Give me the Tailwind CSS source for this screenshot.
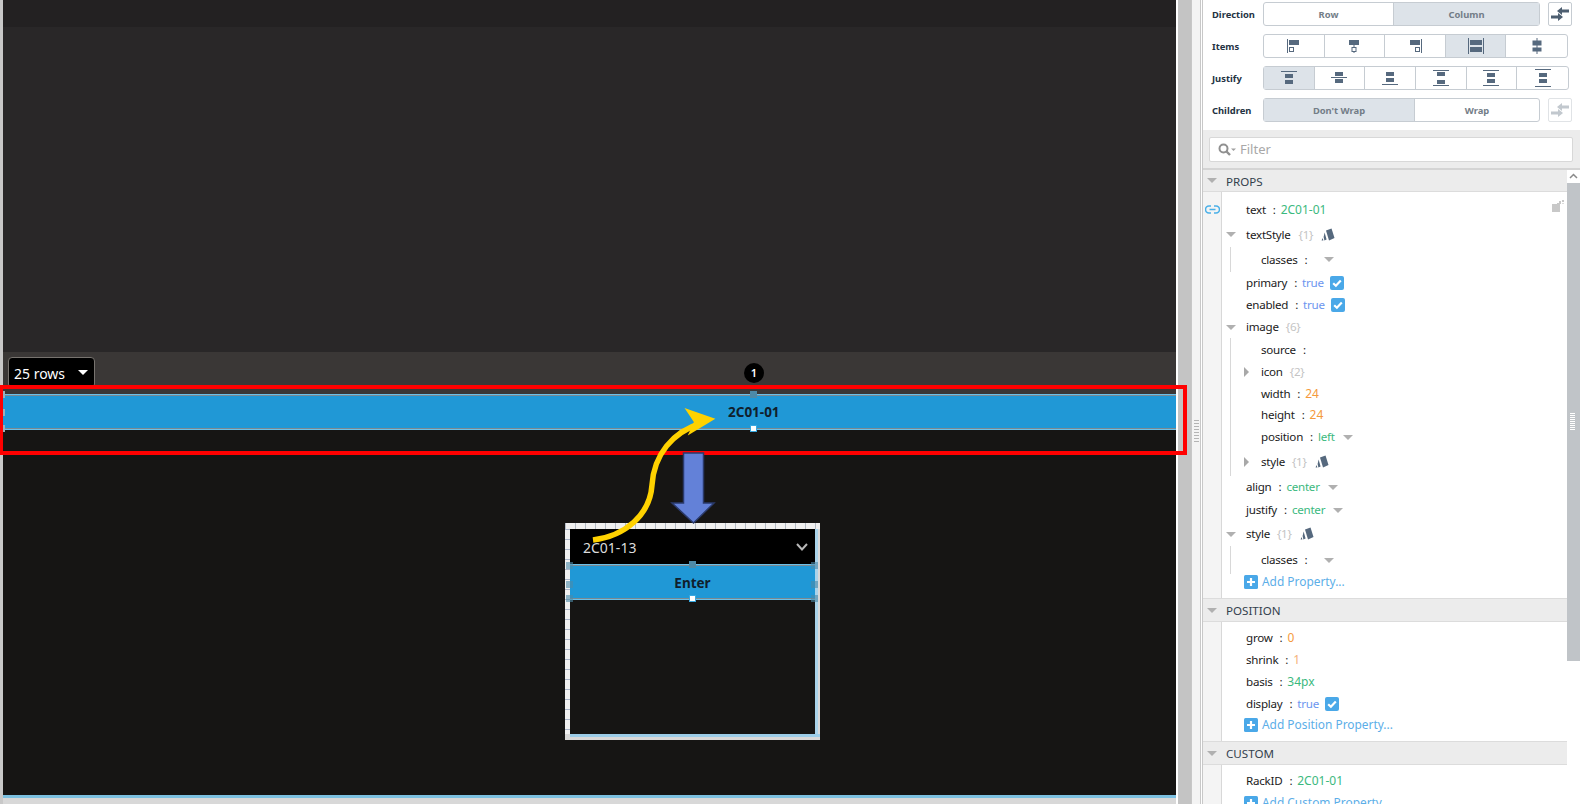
<!DOCTYPE html>
<html lang="en">
<head>
    <meta charset="UTF-8">
    <title>Perspective Designer</title>
    <script src="https://cdn.jsdelivr.net/npm/@tailwindcss/browser@4"></script>
</head>
<body class="bg-[#c4c4c4]">
<svg class="hidden">
    <symbol id="tag" viewBox="0 0 14 14"><path d="M5 2.5 10.5 0.5 13.5 10 8 12.5Z" fill="#56697e"/><path d="M3.6 4.5 5.6 11.5 3.4 12.5 2.6 9Z M1.5 10 2.4 12.6 0.6 12.6Z" fill="#56697e"/></symbol>
    <symbol id="check" viewBox="0 0 14 14"><rect width="14" height="14" rx="2" fill="#4aa8e8"/><path d="M3.2 7.2 5.9 9.8 10.8 4.6" fill="none" stroke="#fff" stroke-width="2.2"/></symbol>
    <symbol id="plus" viewBox="0 0 14 14"><rect width="14" height="14" rx="1.5" fill="#4aa8e8"/><path d="M7 3V11M3 7H11" stroke="#fff" stroke-width="2.2"/></symbol>
    <symbol id="swap" viewBox="0 0 18 14"><path d="M18 2.5H11V0L6 4 11 8V5.5H18Z M0 8.5H7V6L12 10 7 14V11.5H0Z" fill="currentColor"/></symbol>
</svg>

<div class="relative flex w-[1580px] h-[804px] overflow-hidden font-['Noto_Sans',sans-serif]">

    <!-- Canvas -->
    <main class="flex flex-col w-[1176px] h-full shrink-0 border-l-[3px] border-[#c8c8c8] bg-[#161514]">
        <div class="h-[27px] shrink-0 bg-[#232122]"></div>
        <div class="h-[325px] shrink-0 bg-[#292728]"></div>
        <div class="h-[42px] shrink-0 bg-[#3a3736] pl-[5px] pt-[5px]">
            <div class="flex items-center justify-between w-[87px] h-[31px] pl-[5px] pr-[5px] bg-black border border-[#77736f] rounded-[4px] text-white text-[14px]">
                <span class="pt-[1px]">25 rows</span>
                <span class="mr-[1px] border-x-[5px] border-x-transparent border-t-[5px] border-t-white"></span>
            </div>
        </div>
        <div class="flex items-center h-[36px] shrink-0 pl-[725px] bg-[#2098d6] border-y border-[#6cc0e8] shadow-[inset_0_1px_0_#7a8a92,inset_0_-1px_0_#7a8a92]">
            <span class="pt-[1px] text-[13.5px] font-bold text-[#10202c]">2C01-01</span>
        </div>

        <div class="flex-1 pt-[93px] pl-[562px]">
            <!-- Embedded view with its rulers -->
            <div class="flex flex-col w-[255px] h-[217px] bg-[#d8d8d8]">
                <div class="h-[6px] shrink-0 bg-[repeating-linear-gradient(to_right,#b4bcc8_0,#b4bcc8_1px,#f0f0f0_1px,#f0f0f0_10px)]"></div>
                <div class="flex flex-1">
                    <div class="w-[5px] shrink-0 bg-[repeating-linear-gradient(to_bottom,#a8b4c8_0,#a8b4c8_1px,#f0f0f0_1px,#f0f0f0_10px)]"></div>
                    <div class="flex-1 bg-[#161514]">
                        <div class="flex items-center justify-between h-[35px] pl-[13px] pr-[7px] bg-black text-[#dcdcdc] text-[14px]">
                            <span class="pt-[2px]">2C01-13</span>
                            <svg class="w-[12px] h-[8px]" viewBox="0 0 12 8"><path d="M1 1 6 6.5 11 1" fill="none" stroke="#b8b8b8" stroke-width="2"/></svg>
                        </div>
                        <div class="flex items-center justify-center h-[36px] bg-[#2098d6] border-y border-[#6cc0e8] shadow-[inset_0_1px_0_#7a8a92,inset_0_-1px_0_#7a8a92] text-[13.5px] font-bold text-[#10202c]"><span class="pt-[2px]">Enter</span></div>
                    </div>
                    <div class="w-[5px] shrink-0 bg-[#d8d8d8] border-l-[3px] border-[#a9d3ea]"></div>
                </div>
                <div class="h-[6px] shrink-0 ml-[5px] bg-[#d8d8d8] border-t-[3px] border-[#9ccde8]"></div>
            </div>
        </div>
        <div class="h-[9px] shrink-0 bg-[#d8d8d8] border-t-[3px] border-[#7cc0e0]"></div>
    </main>

    <!-- Splitter -->
    <div class="w-[2px] shrink-0 bg-white"></div>
    <div class="w-[13px] shrink-0 bg-[#c4c4c4]"></div>
    <div class="relative w-[10px] shrink-0 bg-[#f4f4f4] border-x border-[#c8c8c8]">
        <div class="absolute left-[2px] top-[420px] w-[5px] h-[24px] bg-[repeating-linear-gradient(to_bottom,#b4b4b4_0,#b4b4b4_1px,transparent_1px,transparent_3px)]"></div>
    </div>
    <div class="w-[2px] shrink-0 bg-white border-r border-[#c8c8c8]"></div>

    <!-- Property panel -->
    <aside class="flex flex-col w-[377px] h-full shrink-0 bg-white text-[11.6px] tracking-[-0.25px] text-[#1b1b1b]">
        <div class="flex flex-col gap-[8px] h-[130px] shrink-0 pt-[2px] bg-white tracking-normal">
            <div class="flex items-center h-[24px] pl-[9px]">
                <span class="w-[51px] pt-[2px] text-[9.4px] font-bold text-[#243343]">Direction</span>
                <div class="flex w-[277px] h-[24px] border border-[#c6ccd2] rounded-[3px] text-[9.4px] font-bold text-[#737d87]">
                    <div class="flex-1 flex items-center justify-center"><span class="pt-[2px]">Row</span></div>
                    <div class="w-[146px] flex items-center justify-center bg-[#dde3e9] border-l border-[#c6ccd2]"><span class="pt-[2px]">Column</span></div>
                </div>
                <div class="flex items-center justify-center w-[24px] h-[24px] ml-[8px] border border-[#c6ccd2] rounded-[2px] text-[#4d5e70]">
                    <svg class="w-[18px] h-[14px]"><use href="#swap"/></svg>
                </div>
            </div>
            <div class="flex items-center h-[24px] pl-[9px]">
                <span class="w-[51px] pt-[2px] text-[9.4px] font-bold text-[#243343]">Items</span>
                <div class="grid grid-cols-5 w-[305px] h-[24px] border border-[#c6ccd2] rounded-[3px] divide-x divide-[#c6ccd2]">
                    <div class="flex items-center justify-center"><svg class="w-[14px] h-[14px]" viewBox="0 0 14 14"><path d="M.5 0V14" stroke="#56697e"/><rect x="2" y="1" width="10" height="5" fill="#56697e"/><rect x="2.5" y="8.5" width="4" height="4" fill="none" stroke="#56697e"/></svg></div>
                    <div class="flex items-center justify-center"><svg class="w-[14px] h-[14px]" viewBox="0 0 14 14"><rect x="2" y="1" width="10" height="5" fill="#56697e"/><rect x="5" y="8.5" width="4" height="4" fill="none" stroke="#56697e"/><path d="M7 6V8M7 12.5V14" stroke="#56697e"/></svg></div>
                    <div class="flex items-center justify-center"><svg class="w-[14px] h-[14px]" viewBox="0 0 14 14"><path d="M13.5 0V14" stroke="#56697e"/><rect x="2" y="1" width="10" height="5" fill="#56697e"/><rect x="7.5" y="8.5" width="4" height="4" fill="none" stroke="#56697e"/></svg></div>
                    <div class="flex items-center justify-center bg-[#dde3e9]"><svg class="w-[16px] h-[16px]" viewBox="0 0 16 16"><path d="M.5 0V16M15.5 0V16" stroke="#56697e"/><rect x="2" y="2" width="12" height="5" fill="#56697e"/><rect x="2" y="9" width="12" height="5" fill="#56697e"/></svg></div>
                    <div class="flex items-center justify-center"><svg class="w-[14px] h-[16px]" viewBox="0 0 14 16"><path d="M7 0V16" stroke="#56697e"/><rect x="2.5" y="2.5" width="9" height="5" fill="#56697e"/><rect x="2.5" y="9.5" width="9" height="4" fill="#56697e"/></svg></div>
                </div>
            </div>
            <div class="flex items-center h-[24px] pl-[9px]">
                <span class="w-[51px] pt-[2px] text-[9.4px] font-bold text-[#243343]">Justify</span>
                <div class="grid grid-cols-6 w-[306px] h-[24px] border border-[#c6ccd2] rounded-[3px] divide-x divide-[#c6ccd2]">
                    <div class="flex items-center justify-center bg-[#dde3e9]"><svg class="w-[16px] h-[14px]" viewBox="0 0 16 14"><path d="M0 .5H16" stroke="#56697e"/><rect x="4" y="3" width="8" height="4" fill="#56697e"/><rect x="4" y="9" width="8" height="4" fill="#56697e"/></svg></div>
                    <div class="flex items-center justify-center"><svg class="w-[16px] h-[14px]" viewBox="0 0 16 14"><path d="M0 6.5H16" stroke="#56697e"/><rect x="4" y="1" width="8" height="4" fill="#56697e"/><rect x="4" y="8" width="8" height="4" fill="#56697e"/></svg></div>
                    <div class="flex items-center justify-center"><svg class="w-[16px] h-[14px]" viewBox="0 0 16 14"><path d="M0 13.5H16" stroke="#56697e"/><rect x="4" y="1" width="8" height="4" fill="#56697e"/><rect x="4" y="7" width="8" height="4" fill="#56697e"/></svg></div>
                    <div class="flex items-center justify-center"><svg class="w-[16px] h-[16px]" viewBox="0 0 16 16"><path d="M0 .5H16M0 15.5H16" stroke="#56697e"/><rect x="4" y="2" width="8" height="4" fill="#56697e"/><rect x="4" y="10" width="8" height="4" fill="#56697e"/></svg></div>
                    <div class="flex items-center justify-center"><svg class="w-[16px] h-[16px]" viewBox="0 0 16 16"><path d="M0 .5H16M0 15.5H16" stroke="#56697e"/><rect x="4" y="3" width="8" height="4" fill="#56697e"/><rect x="4" y="9" width="8" height="4" fill="#56697e"/></svg></div>
                    <div class="flex items-center justify-center"><svg class="w-[16px] h-[18px]" viewBox="0 0 16 18"><path d="M0 .5H16M0 17.5H16" stroke="#56697e"/><rect x="4" y="4" width="8" height="4" fill="#56697e"/><rect x="4" y="10" width="8" height="4" fill="#56697e"/></svg></div>
                </div>
            </div>
            <div class="flex items-center h-[24px] pl-[9px]">
                <span class="w-[51px] pt-[2px] text-[9.4px] font-bold text-[#243343]">Children</span>
                <div class="flex w-[277px] h-[24px] border border-[#c6ccd2] rounded-[3px] text-[9.4px] font-bold text-[#737d87]">
                    <div class="w-[151px] flex items-center justify-center bg-[#dde3e9] border-r border-[#c6ccd2]"><span class="pt-[2px]">Don't Wrap</span></div>
                    <div class="flex-1 flex items-center justify-center"><span class="pt-[2px]">Wrap</span></div>
                </div>
                <div class="flex items-center justify-center w-[24px] h-[24px] ml-[8px] border border-[#e0e3e6] rounded-[2px] text-[#c2c8ce]">
                    <svg class="w-[18px] h-[14px]"><use href="#swap"/></svg>
                </div>
            </div>
        </div>

        <div class="h-[38px] shrink-0 pt-[7px] pl-[6px] bg-[#ececec] tracking-normal">
            <div class="flex items-center w-[364px] h-[25px] pl-[8px] bg-white border border-[#d8d8d8] rounded-[2px]">
                <svg class="w-[18px] h-[14px] mr-[4px]" viewBox="0 0 18 14"><circle cx="5.5" cy="5.5" r="4" fill="none" stroke="#909090" stroke-width="2"/><path d="M8.5 8.5 12 12" stroke="#909090" stroke-width="2.4"/><path d="M13 5.5H18L15.5 8Z" fill="#a0a0a0"/></svg>
                <span class="text-[13px] text-[#a8a8a8]">Filter</span>
            </div>
        </div>

        <div class="relative flex-1 overflow-hidden border-t-2 border-[#d4d4d4]">
            <!-- PROPS -->
            <div class="flex items-center h-[22px] bg-[#ececec] border-b border-[#dcdcdc] pr-[13px]">
                <span class="ml-[4px] mr-[9px] border-x-[5px] border-x-transparent border-t-[5px] border-t-[#b0b0b0]"></span>
                <span class="pt-[2px] tracking-normal text-[#33404c]">PROPS</span>
            </div>
            <div class="flex h-[406px] pr-[13px]">
                <div class="flex items-start justify-center w-[19px] pt-[13px] shrink-0 bg-[#f4f4f4] border-r border-[#d8d8d8]">
                    <svg class="w-[15px] h-[9px]" viewBox="0 0 15 9"><path d="M6 1H4A3.4 3.4 0 0 0 4 8H6M9 1H11A3.4 3.4 0 0 1 11 8H9M4.5 4.5H10.5" fill="none" stroke="#4ab0e8" stroke-width="1.6"/></svg>
                </div>
                <div class="relative flex-1 pt-[6px] pl-[4px]">
                    <svg class="absolute right-[3px] top-[8px] w-[12px] h-[12px]" viewBox="0 0 12 12"><path d="M0 4H5V3H7V1H9V4H8V12H0Z" fill="#c8c8c8"/><rect x="10" y="0" width="2" height="2" fill="#c8c8c8"/><rect x="10" y="3" width="2" height="1" fill="#dcdcdc"/></svg>
                    <div class="flex items-center h-[24px] pl-[20px]"><span>text</span><span class="ml-[7px]">:</span><span class="ml-[5px] text-[12px] tracking-normal text-[#3bb97e]">2C01-01</span></div>
                    <div class="flex items-center h-[25px]">
                        <span class="w-[20px]"><span class="block w-0 h-0 border-x-[5px] border-x-transparent border-t-[5px] border-t-[#b0b0b0]"></span></span>
                        <span>textStyle</span><span class="ml-[8px] text-[#c4c4c4]">{1}</span>
                        <svg class="w-[14px] h-[14px] ml-[8px]"><use href="#tag"/></svg>
                    </div>
                    <div class="ml-[4px] border-l border-[#d8d8d8] flex items-center h-[25px] pl-[30px]">
                        <span>classes</span><span class="ml-[7px]">:</span>
                        <span class="ml-[17px] border-x-[5px] border-x-transparent border-t-[5px] border-t-[#b0b0b0]"></span>
                    </div>
                    <div class="flex items-center h-[22px] pl-[20px]"><span>primary</span><span class="ml-[7px]">:</span><span class="ml-[5px] text-[#6c96ef]">true</span><svg class="w-[14px] h-[14px] ml-[6px]"><use href="#check"/></svg></div>
                    <div class="flex items-center h-[22px] pl-[20px]"><span>enabled</span><span class="ml-[7px]">:</span><span class="ml-[5px] text-[#6c96ef]">true</span><svg class="w-[14px] h-[14px] ml-[6px]"><use href="#check"/></svg></div>
                    <div class="flex items-center h-[22px]">
                        <span class="w-[20px]"><span class="block w-0 h-0 border-x-[5px] border-x-transparent border-t-[5px] border-t-[#b0b0b0]"></span></span>
                        <span>image</span><span class="ml-[7px] text-[#c4c4c4]">{6}</span>
                    </div>
                    <div class="ml-[4px] border-l border-[#d8d8d8]">
                        <div class="flex items-center h-[23px] pl-[30px]"><span>source</span><span class="ml-[7px]">:</span></div>
                        <div class="flex items-center h-[22px] pl-[13px]">
                            <span class="w-[17px]"><span class="block w-0 h-0 border-y-[5px] border-y-transparent border-l-[5px] border-l-[#a8a8a8]"></span></span>
                            <span>icon</span><span class="ml-[7px] text-[#c4c4c4]">{2}</span>
                        </div>
                        <div class="flex items-center h-[21px] pl-[30px]"><span>width</span><span class="ml-[7px]">:</span><span class="ml-[5px] text-[12px] tracking-normal text-[#f59a3c]">24</span></div>
                        <div class="flex items-center h-[22px] pl-[30px]"><span>height</span><span class="ml-[7px]">:</span><span class="ml-[5px] text-[12px] tracking-normal text-[#f59a3c]">24</span></div>
                        <div class="flex items-center h-[22px] pl-[30px]"><span>position</span><span class="ml-[7px]">:</span><span class="ml-[5px] text-[#3bb97e]">left</span><span class="ml-[8px] border-x-[5px] border-x-transparent border-t-[5px] border-t-[#b0b0b0]"></span></div>
                        <div class="flex items-center h-[28px] pl-[13px]">
                            <span class="w-[17px]"><span class="block w-0 h-0 border-y-[5px] border-y-transparent border-l-[5px] border-l-[#a8a8a8]"></span></span>
                            <span>style</span><span class="ml-[7px] text-[#c4c4c4]">{1}</span>
                            <svg class="w-[14px] h-[14px] ml-[8px]"><use href="#tag"/></svg>
                        </div>
                    </div>
                    <div class="flex items-center h-[22px] pl-[20px]"><span>align</span><span class="ml-[7px]">:</span><span class="ml-[5px] text-[#3bb97e]">center</span><span class="ml-[8px] border-x-[5px] border-x-transparent border-t-[5px] border-t-[#b0b0b0]"></span></div>
                    <div class="flex items-center h-[24px] pl-[20px]"><span>justify</span><span class="ml-[7px]">:</span><span class="ml-[5px] text-[#3bb97e]">center</span><span class="ml-[8px] border-x-[5px] border-x-transparent border-t-[5px] border-t-[#b0b0b0]"></span></div>
                    <div class="flex items-center h-[24px]">
                        <span class="w-[20px]"><span class="block w-0 h-0 border-x-[5px] border-x-transparent border-t-[5px] border-t-[#b0b0b0]"></span></span>
                        <span>style</span><span class="ml-[7px] text-[#c4c4c4]">{1}</span>
                        <svg class="w-[14px] h-[14px] ml-[8px]"><use href="#tag"/></svg>
                    </div>
                    <div class="ml-[4px] border-l border-[#d8d8d8] flex items-center h-[28px] pl-[30px]">
                        <span>classes</span><span class="ml-[7px]">:</span>
                        <span class="ml-[17px] border-x-[5px] border-x-transparent border-t-[5px] border-t-[#b0b0b0]"></span>
                    </div>
                    <div class="flex items-center h-[16px] pl-[18px] text-[11.9px] tracking-normal text-[#5caee8]"><svg class="w-[14px] h-[14px] mr-[4px]"><use href="#plus"/></svg>Add Property...</div>
                </div>
            </div>

            <!-- POSITION -->
            <div class="flex items-center h-[24px] bg-[#ececec] border-y border-[#dcdcdc] pr-[13px]">
                <span class="ml-[4px] mr-[9px] border-x-[5px] border-x-transparent border-t-[5px] border-t-[#b0b0b0]"></span>
                <span class="pt-[2px] tracking-normal text-[#33404c]">POSITION</span>
            </div>
            <div class="flex h-[119px] pr-[13px]">
                <div class="w-[19px] shrink-0 bg-[#f4f4f4] border-r border-[#d8d8d8]"></div>
                <div class="flex-1 pt-[5px] pl-[24px]">
                    <div class="flex items-center h-[22px]"><span>grow</span><span class="ml-[7px]">:</span><span class="ml-[5px] text-[12px] tracking-normal text-[#f59a3c]">0</span></div>
                    <div class="flex items-center h-[22px]"><span>shrink</span><span class="ml-[7px]">:</span><span class="ml-[5px] text-[12px] tracking-normal text-[#f5b27a]">1</span></div>
                    <div class="flex items-center h-[22px]"><span>basis</span><span class="ml-[7px]">:</span><span class="ml-[5px] text-[12px] tracking-normal text-[#3bb97e]">34px</span></div>
                    <div class="flex items-center h-[21px]"><span>display</span><span class="ml-[7px]">:</span><span class="ml-[5px] text-[#6c96ef]">true</span><svg class="w-[14px] h-[14px] ml-[6px]"><use href="#check"/></svg></div>
                    <div class="flex items-center h-[22px] ml-[-2px] text-[11.9px] tracking-normal text-[#5caee8]"><svg class="w-[14px] h-[14px] mr-[4px]"><use href="#plus"/></svg>Add Position Property...</div>
                </div>
            </div>

            <!-- CUSTOM -->
            <div class="flex items-center h-[24px] bg-[#ececec] border-y border-[#dcdcdc] pr-[13px]">
                <span class="ml-[4px] mr-[9px] border-x-[5px] border-x-transparent border-t-[5px] border-t-[#b0b0b0]"></span>
                <span class="pt-[2px] tracking-normal text-[#33404c]">CUSTOM</span>
            </div>
            <div class="flex h-[60px] pr-[13px]">
                <div class="w-[19px] shrink-0 bg-[#f4f4f4] border-r border-[#d8d8d8]"></div>
                <div class="flex-1 pt-[5px] pl-[24px]">
                    <div class="flex items-center h-[22px]"><span>RackID</span><span class="ml-[7px]">:</span><span class="ml-[5px] text-[12px] tracking-normal text-[#3bb97e]">2C01-01</span></div>
                    <div class="flex items-center h-[22px] ml-[-2px] text-[11.9px] tracking-normal text-[#5caee8]"><svg class="w-[14px] h-[14px] mr-[4px]"><use href="#plus"/></svg>Add Custom Property...</div>
                </div>
            </div>

            <!-- Scrollbar -->
            <div class="absolute right-0 top-0 bottom-0 w-[13px] bg-white">
                <svg class="w-[13px] h-[13px]" viewBox="0 0 13 13"><path d="M3 8 6.5 4.5 10 8" fill="none" stroke="#8a8a8a" stroke-width="1.5"/></svg>
                <div class="relative h-[478px] bg-[#c0c4c8]">
                    <div class="absolute left-[3px] top-[230px] w-[5px] h-[18px] bg-[repeating-linear-gradient(to_bottom,#ffffff_0,#ffffff_1px,transparent_1px,transparent_2px)]"></div>
                </div>
            </div>
        </div>
    </aside>

    <!-- Annotations and selection marks lying over the page -->
    <div class="absolute left-[744px] top-[363px] flex items-center justify-center w-[20px] h-[20px] rounded-full bg-black text-white text-[11px] font-semibold">1</div>
    <div class="absolute left-[750px] top-[391px] w-[7px] h-[7px] bg-[#4d8aa8]"></div>
    <div class="absolute left-[750px] top-[425px] w-[7px] h-[7px] bg-white border border-[#38a8e0]"></div>
    <div class="absolute left-[689px] top-[561px] w-[7px] h-[7px] bg-[#4d8aa8]"></div>
    <div class="absolute left-[689px] top-[595px] w-[7px] h-[7px] bg-white border border-[#38a8e0]"></div>
    <div class="absolute left-[566px] top-[562px] w-[7px] h-[7px] bg-[#4d8aa8]/60"></div>
    <div class="absolute left-[566px] top-[581px] w-[7px] h-[7px] bg-[#4d8aa8]/60"></div>
    <div class="absolute left-[566px] top-[595px] w-[7px] h-[7px] bg-[#4d8aa8]/60"></div>
    <div class="absolute left-[811px] top-[562px] w-[7px] h-[7px] bg-[#4d8aa8]/60"></div>
    <div class="absolute left-[811px] top-[581px] w-[7px] h-[7px] bg-[#4d8aa8]/60"></div>
    <div class="absolute left-[811px] top-[595px] w-[7px] h-[7px] bg-[#4d8aa8]/60"></div>
    <div class="absolute left-[3px] top-[391px] w-[2px] h-[7px] bg-[#9ab0bc]"></div>
    <div class="absolute left-[3px] top-[409px] w-[2px] h-[7px] bg-[#9ab0bc]"></div>
    <div class="absolute left-[3px] top-[425px] w-[2px] h-[7px] bg-[#9ab0bc]"></div>
    <div class="absolute left-0 top-[385px] w-[1187px] h-[70px] border-4 border-l-[3px] border-[#ff0000]"></div>
    <svg class="absolute left-0 top-0 w-[1580px] h-[804px] pointer-events-none" viewBox="0 0 1580 804">
        <path d="M683.5 453H703.5V503H714L693.5 523 672 503H683.5Z" fill="#6381d8" stroke="#2a3a6b" stroke-width="1.5"/>
        <path d="M593 540C625 536 650 515 652 485 654 455 672 432 702 423" fill="none" stroke="#ffd200" stroke-width="5.5"/>
        <path d="M687 410 713 419 690 433 695 422Z" fill="#ffd200" stroke="#ffd200" stroke-width="2"/>
    </svg>
</div>
</body>
</html>
